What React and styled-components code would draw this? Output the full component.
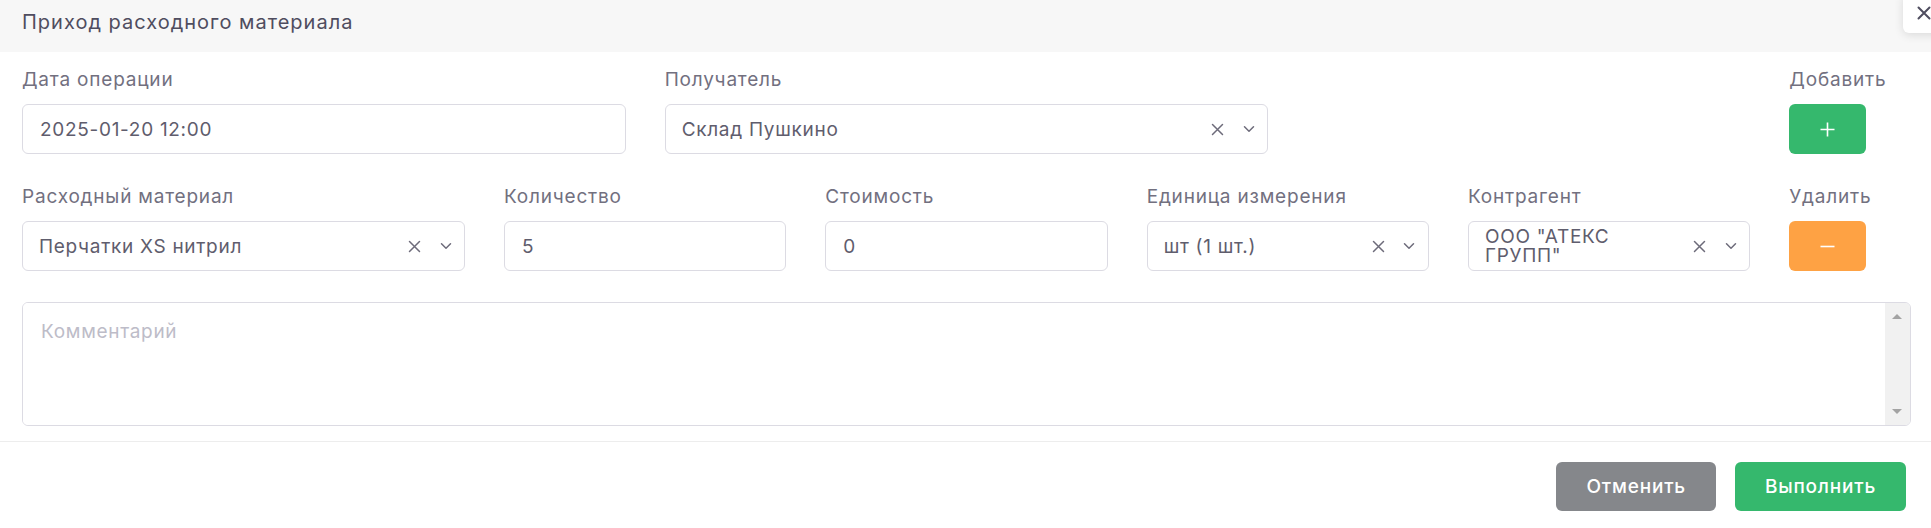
import React from "react";
import styled, { createGlobalStyle } from "styled-components";

const GlobalStyle = createGlobalStyle`
  html, body {
    margin: 0;
    overflow: hidden;
    background: #ffffff;
    font-family: "Inter", "Open Sans", sans-serif;
  }
  * {
    box-sizing: border-box;
  }
`;

const Modal = styled.div`
  position: relative;
  width: 100%;
  background: #ffffff;
`;

const Header = styled.div`
  position: relative;
  height: 52px;
  padding: 9px 22px 0;
  background: #f7f7f7;
`;

const Title = styled.h5`
  margin: 0;
  font-size: 20px;
  line-height: 27px;
  font-weight: 400;
  letter-spacing: 1px;
  color: #4f4d5f;
`;

const CloseButton = styled.button`
  position: absolute;
  top: -7px;
  right: -14px;
  width: 42px;
  height: 40px;
  border: none;
  border-radius: 6px;
  background: #ffffff;
  box-shadow: 0 2px 10px rgba(0, 0, 0, 0.12);
  display: flex;
  align-items: center;
  justify-content: center;
  padding: 0;
  color: #4f4d5f;
`;

const Body = styled.div`
  padding: 16px 20px 15px 22px;
`;

const Grid = styled.div`
  display: grid;
  grid-template-columns: repeat(12, 1fr);
  column-gap: 39px;
  row-gap: 31px;
`;

const Field = styled.div`
  grid-column: ${p => (p.start ? `${p.start} / span ${p.span}` : `span ${p.span}`)};
  display: flex;
  flex-direction: column;
  min-width: 0;
`;

const Label = styled.label`
  font-size: 19px;
  line-height: 24px;
  letter-spacing: 0.8px;
  color: #72707f;
  margin-bottom: 12px;
  white-space: nowrap;
`;

const TextInput = styled.input`
  height: 50px;
  width: 100%;
  padding: 0 17px;
  border: 1px solid #dcdbe3;
  border-radius: 6px;
  font-family: inherit;
  font-size: 19px;
  letter-spacing: 0.7px;
  color: #5f5d6d;
  background: #ffffff;
  outline: none;
`;

const SelectControl = styled.div`
  height: 50px;
  display: flex;
  align-items: center;
  padding-left: 16px;
  padding-right: 3px;
  border: 1px solid #dcdbe3;
  border-radius: 6px;
  background: #ffffff;
`;

const SelectValue = styled.div`
  flex: 1;
  min-width: 0;
  font-size: 19px;
  line-height: 19px;
  letter-spacing: 0.7px;
  color: #5f5d6d;
  padding-right: ${p => (p.tight ? "22px" : "4px")};
`;

const IconBox = styled.span`
  width: 31px;
  height: 100%;
  display: flex;
  align-items: center;
  justify-content: center;
  color: #6d6b7a;
`;

const ActionButton = styled.button`
  width: 77px;
  height: 50px;
  border: none;
  border-radius: 6px;
  background: ${p => p.color};
  display: flex;
  align-items: center;
  justify-content: center;
  padding: 0;
  color: #ffffff;
`;

const CommentBox = styled.div`
  grid-column: span 12;
  height: 124px;
  display: flex;
  border: 1px solid #dcdbe3;
  border-radius: 6px;
  overflow: hidden;
`;

const CommentInput = styled.textarea`
  flex: 1;
  border: none;
  outline: none;
  resize: none;
  padding: 17px 18px;
  font-family: inherit;
  font-size: 19px;
  line-height: 24px;
  letter-spacing: 0.7px;
  color: #5f5d6d;
  overflow: hidden;

  &::placeholder {
    color: #bdbcc8;
  }
`;

const ScrollTrack = styled.div`
  width: 25px;
  background: #f1f1f1;
  display: flex;
  flex-direction: column;
  align-items: center;
  justify-content: space-between;
  padding: 11px 0 11px;
`;

const Arrow = styled.span`
  width: 0;
  height: 0;
  border-left: 5px solid transparent;
  border-right: 5px solid transparent;
  ${p =>
    p.down
      ? "border-top: 5px solid #a3a3a3;"
      : "border-bottom: 5px solid #a3a3a3;"}
`;

const Footer = styled.div`
  border-top: 1px solid #ededed;
  padding: 20px 25px 0;
  display: flex;
  justify-content: flex-end;
  gap: 19px;
`;

const FooterButton = styled.button`
  height: 49px;
  padding: 0 30px;
  border: none;
  border-radius: 6px;
  background: ${p => p.color};
  color: #ffffff;
  font-family: inherit;
  font-size: 19px;
  font-weight: 500;
  letter-spacing: 0.8px;
`;

const ClearIcon = () => (
  <svg width="13" height="13" viewBox="0 0 13 13" fill="none">
    <path d="M1.5 1.5l10 10M11.5 1.5l-10 10" stroke="currentColor" strokeWidth="1.5" strokeLinecap="round" />
  </svg>
);

const ChevronIcon = () => (
  <svg width="12" height="8" viewBox="0 0 12 8" fill="none">
    <path d="M1.5 1.8l4.5 4.4 4.5-4.4" stroke="currentColor" strokeWidth="1.5" strokeLinecap="round" strokeLinejoin="round" />
  </svg>
);

const PlusIcon = () => (
  <svg width="15" height="15" viewBox="0 0 15 15" fill="none">
    <path d="M7.5 0.5v14M0.5 7.5h14" stroke="currentColor" strokeWidth="1.6" />
  </svg>
);

const MinusIcon = () => (
  <svg width="15" height="3" viewBox="0 0 15 3" fill="none">
    <path d="M0.5 1.5h14" stroke="currentColor" strokeWidth="1.6" />
  </svg>
);

const Select = ({ value, tight }) => (
  <SelectControl>
    <SelectValue tight={tight}>{value}</SelectValue>
    <IconBox><ClearIcon /></IconBox>
    <IconBox><ChevronIcon /></IconBox>
  </SelectControl>
);

export default function App() {
  return (
    <>
      <GlobalStyle />
      <Modal>
        <Header>
          <Title>Приход расходного материала</Title>
          <CloseButton>
            <svg width="14" height="14" viewBox="0 0 14 14" fill="none">
              <path d="M1.5 1.5l11 11M12.5 1.5l-11 11" stroke="currentColor" strokeWidth="2" strokeLinecap="round" />
            </svg>
          </CloseButton>
        </Header>

        <Body>
          <Grid>
            <Field span={4}>
              <Label>Дата операции</Label>
              <TextInput defaultValue="2025-01-20 12:00" />
            </Field>
            <Field span={4}>
              <Label>Получатель</Label>
              <Select value="Склад Пушкино" />
            </Field>
            <Field span={1} start={12}>
              <Label>Добавить</Label>
              <ActionButton color="#35b86d"><PlusIcon /></ActionButton>
            </Field>

            <Field span={3}>
              <Label>Расходный материал</Label>
              <Select value="Перчатки XS нитрил" />
            </Field>
            <Field span={2}>
              <Label>Количество</Label>
              <TextInput defaultValue="5" />
            </Field>
            <Field span={2}>
              <Label>Стоимость</Label>
              <TextInput defaultValue="0" />
            </Field>
            <Field span={2}>
              <Label>Единица измерения</Label>
              <Select value="шт (1 шт.)" />
            </Field>
            <Field span={2}>
              <Label>Контрагент</Label>
              <Select value={'ООО "АТЕКС ГРУПП"'} tight />
            </Field>
            <Field span={1}>
              <Label>Удалить</Label>
              <ActionButton color="#fea244"><MinusIcon /></ActionButton>
            </Field>

            <CommentBox>
              <CommentInput placeholder="Комментарий" />
              <ScrollTrack>
                <Arrow />
                <Arrow down />
              </ScrollTrack>
            </CommentBox>
          </Grid>
        </Body>

        <Footer>
          <FooterButton color="#85878b">Отменить</FooterButton>
          <FooterButton color="#35b86d">Выполнить</FooterButton>
        </Footer>
      </Modal>
    </>
  );
}
